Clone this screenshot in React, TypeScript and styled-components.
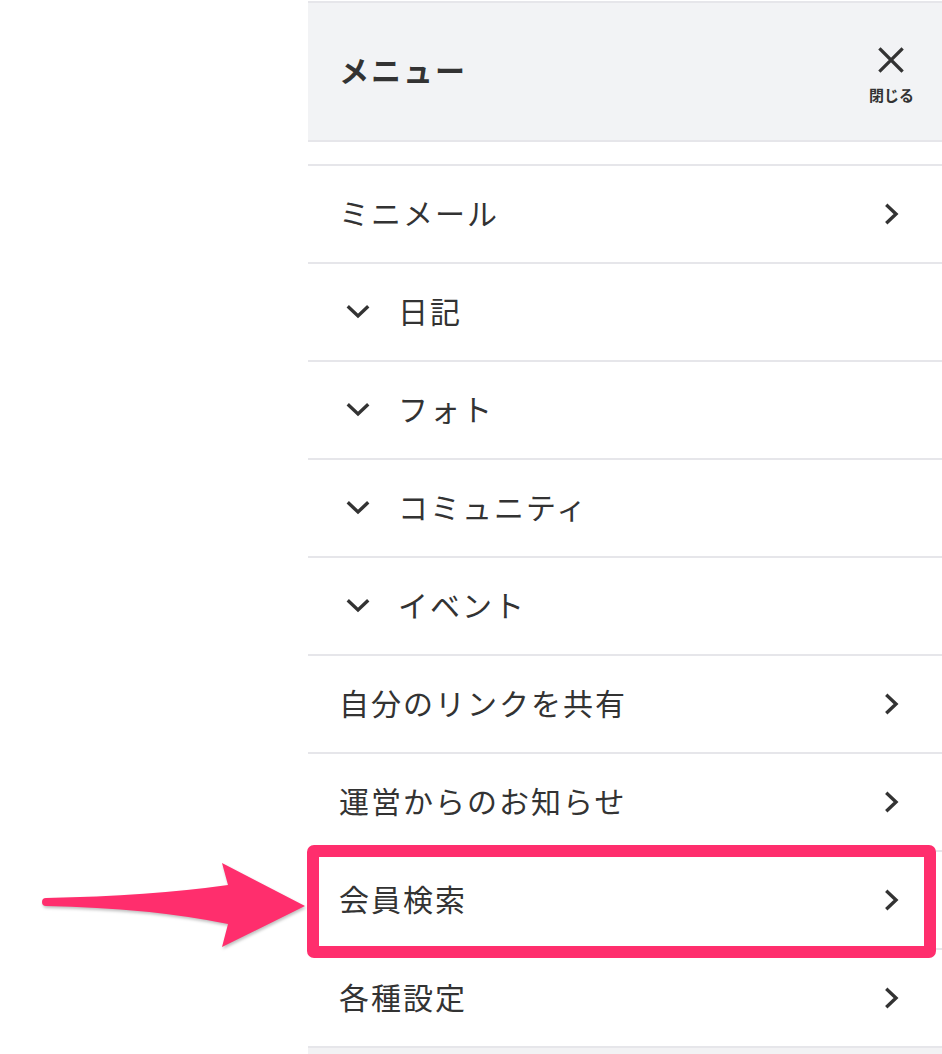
import { createGlobalStyle } from "styled-components";
import styled from "styled-components";

const GlobalStyle = createGlobalStyle`
  html, body {
    margin: 0;
    padding: 0;
    background: #fff;
  }
  body {
    font-family: "Noto Sans CJK JP", "Noto Sans", sans-serif;
    color: #333;
  }
`;

const Page = styled.div`
  display: flex;
  min-height: 1054px;
`;

const Spacer = styled.div`
  width: 308px;
  flex-shrink: 0;
`;

const Panel = styled.nav`
  flex: 1;
  display: flex;
  flex-direction: column;
  padding-top: 1px;
`;

const Header = styled.header`
  height: 137px;
  background: #f2f3f5;
  border-top: 2px solid #e6e6ea;
  border-bottom: 2px solid #e6e6ea;
  display: flex;
  align-items: center;
  justify-content: space-between;
  padding: 0 28px 0 31px;

  h1 {
    margin: 0 0 5px;
    font-size: 30px;
    font-weight: 700;
    letter-spacing: 2px;
    color: #333;
  }
`;

const CloseButton = styled.button`
  border: none;
  background: none;
  padding: 0;
  margin-top: 6px;
  display: flex;
  flex-direction: column;
  align-items: center;
  gap: 14px;
  color: #333;
  font-family: inherit;
  font-size: 15px;
  font-weight: 700;
  line-height: 1;
  cursor: pointer;
`;

const Gap = styled.div`
  height: 22px;
`;

const List = styled.ul`
  list-style: none;
  margin: 0;
  padding: 0;
  border-bottom: 2px solid #e6e6ea;
`;

const Row = styled.li<{ $sub?: boolean }>`
  position: relative;
  height: 96px;
  border-top: 2px solid #e6e6ea;
  display: flex;
  align-items: center;
  padding: 0 42px 0 ${(p) => (p.$sub ? "38px" : "31px")};
  gap: 28px;
  font-size: 30px;
  letter-spacing: 2px;
  color: #333;

  span {
    flex: 1;
    margin-bottom: 4px;
  }
`;

const Footer = styled.div`
  flex: 1;
  background: #f2f2f4;
`;

const Highlight = styled.div`
  position: absolute;
  z-index: 2;
  top: -7px;
  left: -1px;
  right: 6px;
  bottom: -10px;
  border: 12px solid #ff2e6d;
  border-radius: 7px;
  pointer-events: none;
`;

const Arrow = styled.svg`
  position: absolute;
  z-index: 2;
  left: -308px;
  top: -10px;
  width: 320px;
  height: 130px;
  filter: drop-shadow(1px 2px 1.5px rgba(0, 0, 0, 0.25));
  pointer-events: none;
`;

const ChevronRight = () => (
  <svg width="16" height="24" viewBox="0 0 16 24">
    <path d="M3.5 4 L12 12 L3.5 20" fill="none" stroke="#333" strokeWidth="3.4" strokeLinecap="square" />
  </svg>
);

const ChevronDown = () => (
  <svg width="24" height="16" viewBox="0 0 24 16">
    <path d="M3 3.5 L12 12 L21 3.5" fill="none" stroke="#333" strokeWidth="3.4" strokeLinecap="square" />
  </svg>
);

const CloseIcon = () => (
  <svg width="26" height="26" viewBox="0 0 26 26">
    <path d="M2.5 2.5 L23.5 23.5 M23.5 2.5 L2.5 23.5" stroke="#333" strokeWidth="3.2" strokeLinecap="square" />
  </svg>
);

type Item = { label: string; sub?: boolean; marked?: boolean };

const items: Item[] = [
  { label: "ミニメール" },
  { label: "日記", sub: true },
  { label: "フォト", sub: true },
  { label: "コミュニティ", sub: true },
  { label: "イベント", sub: true },
  { label: "自分のリンクを共有" },
  { label: "運営からのお知らせ" },
  { label: "会員検索", marked: true },
  { label: "各種設定" },
];

function App() {
  return (
    <>
      <GlobalStyle />
      <Page>
        <Spacer />
        <Panel>
          <Header>
            <h1>メニュー</h1>
            <CloseButton>
              <CloseIcon />
              閉じる
            </CloseButton>
          </Header>
          <Gap />
          <List>
            {items.map((item) => (
              <Row key={item.label} $sub={item.sub}>
                {item.sub && <ChevronDown />}
                <span>{item.label}</span>
                {!item.sub && <ChevronRight />}
                {item.marked && (
                  <>
                    <Highlight />
                    <Arrow viewBox="0 0 320 130">
                      <path
                        d="M46 56 Q150 54 228 43 L222 21 L305 64 L222 105 L228 82 Q150 66 46 64 A4 4 0 0 1 46 56 Z"
                        fill="#ff2e6d"
                      />
                    </Arrow>
                  </>
                )}
              </Row>
            ))}
          </List>
          <Footer />
        </Panel>
      </Page>
    </>
  );
}

export default App;
